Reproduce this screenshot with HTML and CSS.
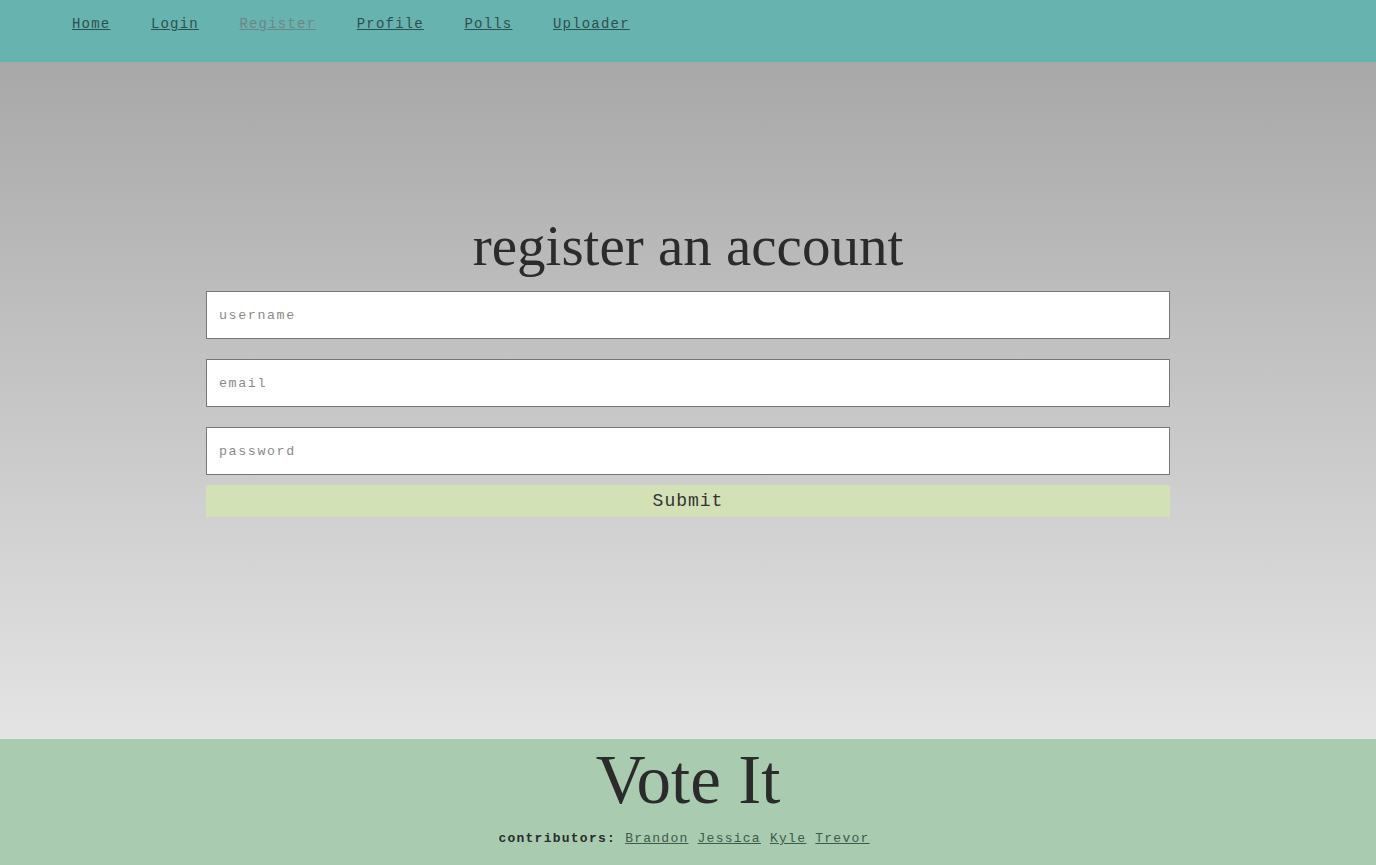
FILE: index.html
```html
<!DOCTYPE html>
<html>
<head>
<meta charset="utf-8">
<link rel="stylesheet" href="styles.css">
</head>
<body>
<header class="topbar">
  <nav class="nav">
    <a href="#">Home</a>
    <a href="#">Login</a>
    <a href="#" class="current">Register</a>
    <a href="#">Profile</a>
    <a href="#">Polls</a>
    <a href="#">Uploader</a>
  </nav>
</header>
<main class="main">
  <form class="form">
    <h1 class="title">register an account</h1>
    <input class="field" type="text" placeholder="username">
    <input class="field" type="email" placeholder="email">
    <input class="field" type="password" placeholder="password">
    <button class="submit" type="button">Submit</button>
  </form>
</main>
<footer class="footer">
  <div class="brand">Vote It</div>
  <div class="credits"><b>contributors:</b> <a href="#">Brandon</a> <a href="#">Jessica</a> <a href="#">Kyle</a> <a href="#">Trevor</a></div>
</footer>
</body>
</html>
```
FILE: styles.css
```css
* { box-sizing: border-box; }
html, body { margin: 0; padding: 0; }
body {
  font-family: "Liberation Mono", monospace;
  color: #2b2b2b;
  height: 865px;
  display: flex;
  flex-direction: column;
}
.topbar {
  background: #67b3b0;
  height: 62px;
  flex: none;
}
.nav {
  display: flex;
  gap: 40.5px;
  padding: 14px 0 0 72px;
}
.nav a {
  font-size: 14px;
  letter-spacing: 1.2px;
  color: #2f4f4f;
  text-decoration: underline;
  line-height: 20px;
}
.nav a.current { color: #6f8585; }
.main {
  flex: 1;
  background: linear-gradient(to bottom, #a8a8a8, #e4e4e4);
  display: flex;
  justify-content: center;
  padding-top: 151px;
}
.form {
  width: 964px;
  display: flex;
  flex-direction: column;
}
.title {
  font-family: "Liberation Serif", serif;
  font-weight: normal;
  font-size: 57px;
  text-align: center;
  margin: 0 0 13px;
  line-height: 65px;
  color: #2b2b2b;
}
.field {
  height: 48px;
  border: 1px solid #767676;
  background: #fff;
  padding: 0 12px;
  font-family: "Liberation Mono", monospace;
  font-size: 13.33px;
  letter-spacing: 1.6px;
  margin-bottom: 20px;
  outline: none;
}
.field:last-of-type { margin-bottom: 10px; }
.field::placeholder { color: #8a8a8a; }
.submit {
  height: 32px;
  border: none;
  background: #d3e1b7;
  font-family: "Liberation Mono", monospace;
  font-size: 18px;
  letter-spacing: 1px;
  color: #333;
}
.footer {
  background: #a9cbb0;
  height: 126px;
  flex: none;
  text-align: center;
}
.brand {
  font-family: "Liberation Serif", serif;
  font-size: 69px;
  line-height: 72px;
  padding-top: 5px;
  color: #2b2b2b;
}
.credits {
  font-size: 13px;
  letter-spacing: 1.25px;
  margin-top: 15px;
  padding-right: 8px;
}
.credits b { color: #2b2b2b; }
.credits a { color: #3d5a4a; }
```
